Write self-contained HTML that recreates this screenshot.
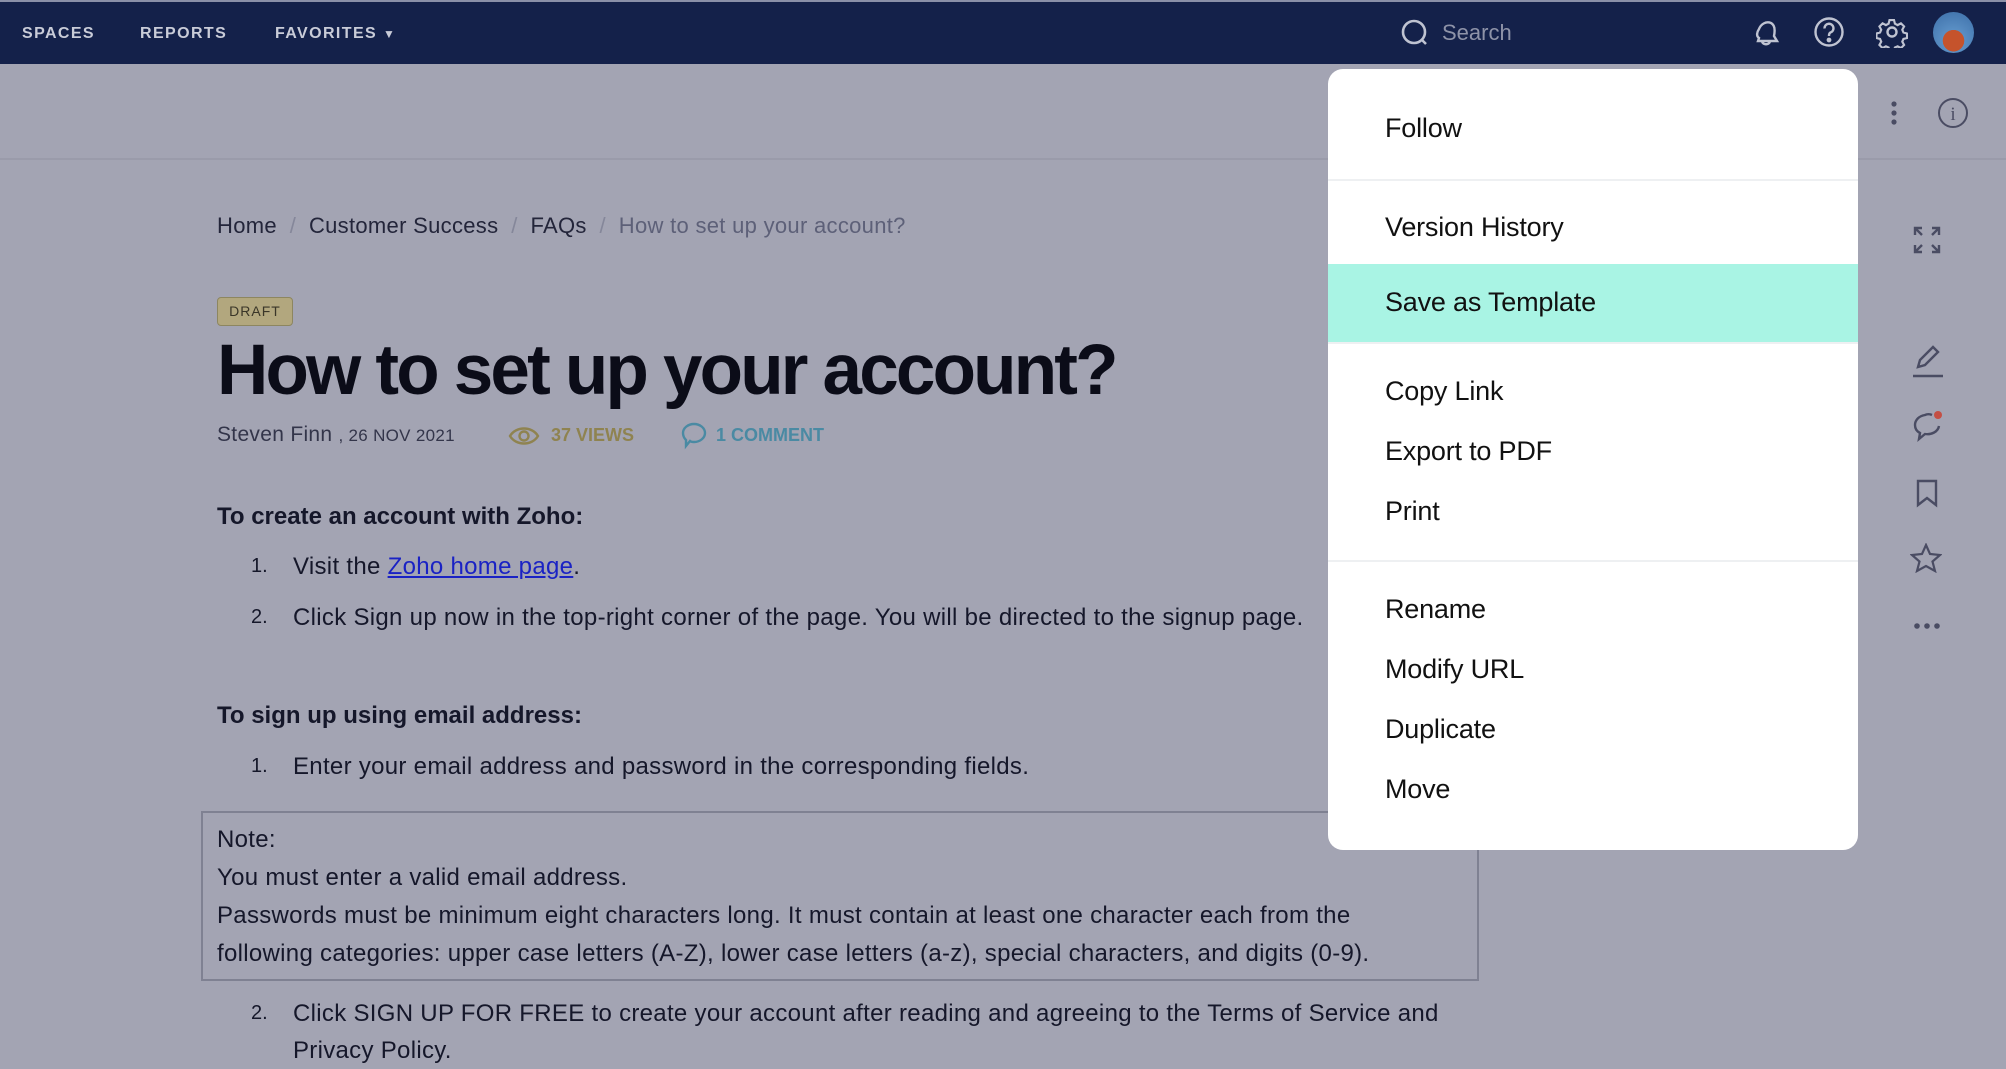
<!DOCTYPE html>
<html><head><meta charset="utf-8"><style>
*{margin:0;padding:0;box-sizing:border-box}
body{width:2006px;height:1069px;overflow:hidden;background:#a3a4b3;font-family:"Liberation Sans",sans-serif;color:#15172a;position:relative}
.a{position:absolute;white-space:nowrap}
.nav{position:absolute;left:0;top:0;width:2006px;height:64px;background:#14214a;border-top:2px solid #8a90a8}
.nl{font-size:16px;font-weight:bold;letter-spacing:1.4px;color:#c9ccd8;top:25px}
.hdr{position:absolute;left:0;top:64px;width:2006px;height:96px;border-bottom:2px solid #9a9baa}
.bc{font-size:22px;top:213px;color:#23253a;letter-spacing:.3px}
.sep{color:#85879a}
.t{font-size:24px;color:#15172a;letter-spacing:.3px}
.menu{position:absolute;left:1328px;top:69px;width:530px;height:781px;background:#fff;border-radius:15px;overflow:hidden}
.mi{position:absolute;left:57px;font-size:27px;color:#111;white-space:nowrap;letter-spacing:-.2px}
.dv{position:absolute;left:0;width:530px;height:2px;background:#eef0f2}
svg{position:absolute}
</style></head><body>
<div class="nav"></div>
<div class="a nl" style="left:22px">SPACES</div>
<div class="a nl" style="left:140px">REPORTS</div>
<div class="a nl" style="left:275px">FAVORITES <span style="font-size:12px">▼</span></div>
<svg style="left:1400px;top:18px" width="30" height="30" viewBox="0 0 30 30"><circle cx="14" cy="14" r="11" fill="none" stroke="#bfc3d1" stroke-width="2.6"/><path d="M21 21l5 5" stroke="#bfc3d1" stroke-width="2.6"/></svg>
<div class="a" style="left:1442px;top:20px;font-size:22px;color:#8e93a8">Search</div>
<svg style="left:1750px;top:16px" width="32" height="32" viewBox="0 0 32 32" fill="none" stroke="#bfc3d1" stroke-width="2.4"><path d="M9 22c-3-2-2-6 0-9 2-5 7-8 12-6 4 2 4 8 3 13l3 5-19 0zM12 26c2 3 6 3 8 0"/></svg>
<svg style="left:1813px;top:16px" width="32" height="32" viewBox="0 0 32 32" fill="none" stroke="#bfc3d1" stroke-width="2.4"><circle cx="16" cy="16" r="13.5"/><path d="M11.5 12.5a4.5 4.5 0 1 1 6 4c-1.5.7-1.5 2-1.5 3.5"/><circle cx="16" cy="24" r="1.2" fill="#bfc3d1"/></svg>
<svg style="left:1876px;top:16px" width="32" height="32" viewBox="0 0 32 32" fill="none" stroke="#bfc3d1" stroke-width="2.4"><path d="M13.5 3h5l1 4 3 1.6 3.7-2 3.5 3.5-2 3.7 1.3 3 4 1.2v5l-4 1-1.3 3 2 3.7-3.5 3.5-3.7-2-3 1.3-1 4h-5l-1-4-3-1.3-3.7 2-3.5-3.5 2-3.7-1.3-3-4-1v-5l4-1.2 1.3-3-2-3.7 3.5-3.5 3.7 2 3-1.6z" transform="scale(.9) translate(1.5 1.5)"/><circle cx="16" cy="16" r="4.5"/></svg>
<div class="a" style="left:1933px;top:12px;width:41px;height:41px;border-radius:50%;background:radial-gradient(circle at 50% 70%,#c5532c 0 30%,#5a8fc4 31%,#3c6ea8 100%)"></div>
<div class="hdr"></div>
<svg style="left:1888px;top:100px" width="12" height="28"><circle cx="6" cy="4" r="2.6" fill="#4a4c63"/><circle cx="6" cy="13" r="2.6" fill="#4a4c63"/><circle cx="6" cy="22" r="2.6" fill="#4a4c63"/></svg>
<svg style="left:1937px;top:97px" width="32" height="32" viewBox="0 0 32 32"><circle cx="16" cy="16" r="14" fill="none" stroke="#4a4c63" stroke-width="2"/><text x="16" y="23" font-size="19" text-anchor="middle" fill="#4a4c63" font-family="Liberation Serif">i</text></svg>
<div class="a bc" style="left:217px">Home <span class="sep">&nbsp;/&nbsp;</span> Customer Success <span class="sep">&nbsp;/&nbsp;</span> FAQs <span class="sep">&nbsp;/&nbsp;</span> <span style="color:#5d6078">How to set up your account?</span></div>
<div class="a" style="left:217px;top:297px;width:76px;height:29px;background:#b2a77e;border:1px solid #8d8660;border-radius:4px;font-size:14px;letter-spacing:1px;color:#3a3628;text-align:center;line-height:27px">DRAFT</div>
<div class="a" style="left:217px;top:330px;font-size:71px;font-weight:bold;letter-spacing:-2.8px;color:#0b0c18">How to set up your account?</div>
<div class="a" style="left:217px;top:423px;font-size:21px;color:#33354a;letter-spacing:.3px">Steven Finn <span style="font-size:17px">, 26 NOV 2021</span></div>
<svg style="left:508px;top:424px" width="32" height="24" viewBox="0 0 32 24" fill="none" stroke="#8f8350" stroke-width="2.4"><path d="M2 12c6-10 22-10 28 0-6 10-22 10-28 0z"/><circle cx="16" cy="12" r="4.5"/></svg>
<div class="a" style="left:551px;top:425px;font-size:18px;font-weight:bold;color:#8f8350">37 VIEWS</div>
<svg style="left:681px;top:422px" width="26" height="28" viewBox="0 0 26 28" fill="none" stroke="#4a8aa3" stroke-width="2.4"><path d="M13 2c6 0 11 4 11 9s-5 9-11 9c-2 0-3 0-4-1l-4 5v-6c-2-2-3-4-3-7 0-5 5-9 11-9z"/></svg>
<div class="a" style="left:716px;top:425px;font-size:18px;font-weight:bold;color:#4a8aa3">1 COMMENT</div>
<div class="a t" style="left:217px;top:503px;font-weight:bold;letter-spacing:0">To create an account with Zoho:</div>
<div class="a t" style="left:251px;top:555px;font-size:20px;letter-spacing:0">1.</div>
<div class="a t" style="left:293px;top:553px">Visit the <span style="color:#1a22c4;text-decoration:underline">Zoho home page</span>.</div>
<div class="a t" style="left:251px;top:606px;font-size:20px;letter-spacing:0">2.</div>
<div class="a t" style="left:293px;top:604px">Click Sign up now in the top-right corner of the page. You will be directed to the signup page.</div>
<div class="a t" style="left:217px;top:702px;font-weight:bold;letter-spacing:0">To sign up using email address:</div>
<div class="a t" style="left:251px;top:755px;font-size:20px;letter-spacing:0">1.</div>
<div class="a t" style="left:293px;top:753px">Enter your email address and password in the corresponding fields.</div>
<div class="a" style="left:201px;top:811px;width:1278px;height:170px;border:2px solid #7f8192"></div>
<div class="a t" style="left:217px;top:826px">Note:</div>
<div class="a t" style="left:217px;top:864px">You must enter a valid email address.</div>
<div class="a t" style="left:217px;top:902px">Passwords must be minimum eight characters long. It must contain at least one character each from the</div>
<div class="a t" style="left:217px;top:940px">following categories: upper case letters (A-Z), lower case letters (a-z), special characters, and digits (0-9).</div>
<div class="a t" style="left:251px;top:1002px;font-size:20px;letter-spacing:0">2.</div>
<div class="a t" style="left:293px;top:1000px">Click SIGN UP FOR FREE to create your account after reading and agreeing to the Terms of Service and</div>
<div class="a t" style="left:293px;top:1037px">Privacy Policy.</div>
<svg style="left:1912px;top:225px" width="30" height="30" viewBox="0 0 30 30" fill="none" stroke="#4a4c63" stroke-width="2.4"><path d="M3 10V3h7M3 3l7 7M20 3h7v7M27 3l-7 7M3 20v7h7M3 27l7-7M27 20v7h-7M27 27l-7-7"/></svg>
<svg style="left:1911px;top:343px" width="34" height="36" viewBox="0 0 34 36" fill="none" stroke="#4a4c63" stroke-width="2.4"><path d="M7 24l2-7L22 4l5 5-13 13zM2 33h30"/></svg>
<svg style="left:1912px;top:410px" width="34" height="34" viewBox="0 0 34 34" fill="none" stroke="#4a4c63" stroke-width="2.4"><path d="M20 5c-2-1-5-1-7 0C7 6 3 10 3 15c0 3 1 6 5 8l-1 6 6-5c6 1 13-2 14-8"/><circle cx="26" cy="5" r="4" fill="#c44f44" stroke="none"/></svg>
<svg style="left:1915px;top:478px" width="24" height="30" viewBox="0 0 24 30" fill="none" stroke="#4a4c63" stroke-width="2.4"><path d="M3 3h18v24l-9-7-9 7z"/></svg>
<svg style="left:1910px;top:543px" width="32" height="30" viewBox="0 0 32 30" fill="none" stroke="#4a4c63" stroke-width="2.2"><path d="M16 2l4 9 10 1-7.5 6.5 2.5 9.5L16 23l-9 5 2.5-9.5L2 12l10-1z"/></svg>
<svg style="left:1912px;top:620px" width="32" height="12"><circle cx="5" cy="6" r="2.8" fill="#4a4c63"/><circle cx="15" cy="6" r="2.8" fill="#4a4c63"/><circle cx="25" cy="6" r="2.8" fill="#4a4c63"/></svg>
<div class="menu">
<div class="mi" style="top:44px">Follow</div>
<div class="dv" style="top:110px"></div>
<div class="mi" style="top:143px">Version History</div>
<div style="position:absolute;left:0;top:195px;width:530px;height:78px;background:#a9f4e4"></div>
<div class="mi" style="top:218px">Save as Template</div>
<div class="dv" style="top:273px"></div>
<div class="mi" style="top:307px">Copy Link</div>
<div class="mi" style="top:367px">Export to PDF</div>
<div class="mi" style="top:427px">Print</div>
<div class="dv" style="top:491px"></div>
<div class="mi" style="top:525px">Rename</div>
<div class="mi" style="top:585px">Modify URL</div>
<div class="mi" style="top:645px">Duplicate</div>
<div class="mi" style="top:705px">Move</div>
</div>
</body></html>
